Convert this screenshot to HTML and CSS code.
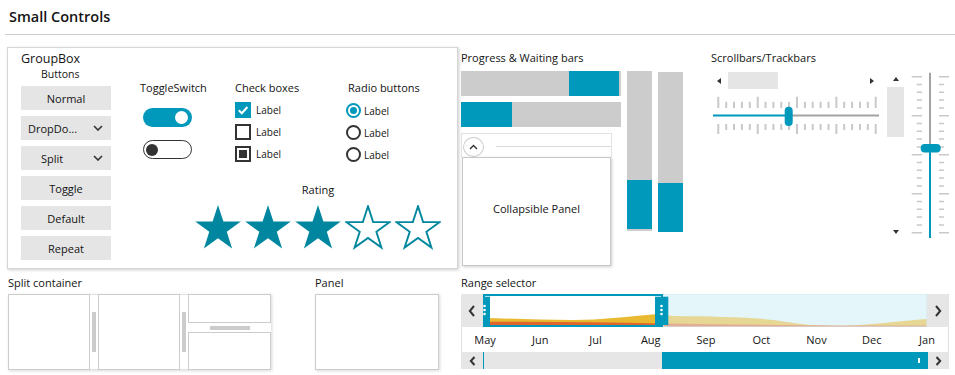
FILE: index.html
```html
<!DOCTYPE html>
<html lang="en">
<head>
    <meta charset="UTF-8">
    <title>Small Controls</title>
    <link rel="stylesheet" href="styles.css">
</head>
<body>
<div class="page">
    <h1 class="page-title">Small Controls</h1>

    <div class="row-top">
        <!-- GROUPBOX -->
        <div class="groupbox">
            <div class="groupbox-title">GroupBox</div>
            <div class="groupbox-body">
                <div class="buttons-col">
                    <div class="col-title">Buttons</div>
                    <button class="btn">Normal</button>
                    <button class="btn btn-drop">
                        <span class="btn-text">DropDo...</span>
                        <svg class="chev" width="10" height="6" viewBox="0 0 10 6"><path d="M1 1L5 5L9 1" /></svg>
                    </button>
                    <button class="btn btn-split">
                        <span>Split</span>
                        <svg class="chev" width="10" height="6" viewBox="0 0 10 6"><path d="M1 1L5 5L9 1" /></svg>
                    </button>
                    <button class="btn">Toggle</button>
                    <button class="btn">Default</button>
                    <button class="btn">Repeat</button>
                </div>

                <div class="controls">
                    <div class="controls-row">
                        <div class="toggles">
                            <div class="ctl-title">ToggleSwitch</div>
                            <div class="toggle toggle-on"><span class="knob"></span></div>
                            <div class="toggle toggle-off"><span class="knob"></span></div>
                        </div>
                        <div class="checks">
                            <div class="ctl-title">Check boxes</div>
                            <div class="check-list">
                                <div class="check">
                                    <span class="box box-checked">
                                        <svg width="12" height="12" viewBox="0 0 12 12"><path d="M1.8 6.3L4.8 9.2L10.4 3" /></svg>
                                    </span>Label
                                </div>
                                <div class="check"><span class="box"></span>Label</div>
                                <div class="check"><span class="box box-mixed"><span class="box-fill"></span></span>Label</div>
                            </div>
                        </div>
                        <div class="radios">
                            <div class="ctl-title">Radio buttons</div>
                            <div class="radio-list">
                                <div class="radio"><span class="dot dot-on"><span class="dot-fill"></span></span>Label</div>
                                <div class="radio"><span class="dot"></span>Label</div>
                                <div class="radio"><span class="dot"></span>Label</div>
                            </div>
                        </div>
                    </div>

                    <div class="rating">
                        <div class="rating-title">Rating</div>
                        <div class="stars">
                            <svg class="star star-full" width="46" height="45" viewBox="0 0 46 45"><polygon points="23,0 28.4,16.6 45.8,16.6 31.8,26.8 37.1,43.4 23,33.2 8.9,43.4 14.3,26.8 0.2,16.6 17.6,16.6" /></svg>
                            <svg class="star star-full" width="46" height="45" viewBox="0 0 46 45"><polygon points="23,0 28.4,16.6 45.8,16.6 31.8,26.8 37.1,43.4 23,33.2 8.9,43.4 14.3,26.8 0.2,16.6 17.6,16.6" /></svg>
                            <svg class="star star-full" width="46" height="45" viewBox="0 0 46 45"><polygon points="23,0 28.4,16.6 45.8,16.6 31.8,26.8 37.1,43.4 23,33.2 8.9,43.4 14.3,26.8 0.2,16.6 17.6,16.6" /></svg>
                            <svg class="star star-empty" width="46" height="45" viewBox="-1.2 -1.2 48.4 47"><polygon points="23,0 28.4,16.6 45.8,16.6 31.8,26.8 37.1,43.4 23,33.2 8.9,43.4 14.3,26.8 0.2,16.6 17.6,16.6" /></svg>
                            <svg class="star star-empty" width="46" height="45" viewBox="-1.2 -1.2 48.4 47"><polygon points="23,0 28.4,16.6 45.8,16.6 31.8,26.8 37.1,43.4 23,33.2 8.9,43.4 14.3,26.8 0.2,16.6 17.6,16.6" /></svg>
                        </div>
                    </div>
                </div>
            </div>
        </div>

        <!-- PROGRESS -->
        <div class="progress-section">
            <div class="section-title">Progress &amp; Waiting bars</div>
            <div class="progress-grid">
                <div class="hbar hbar-1"><div class="bar-fill" style="margin-left: 108px; width: 50px;"></div></div>
                <div class="hbar hbar-2"><div class="bar-fill" style="width: 51px;"></div></div>
                <div class="collapsible">
                    <div class="collapse-head">
                        <span class="collapse-btn">
                            <svg width="9" height="6" viewBox="0 0 9 6"><path d="M1 5L4.5 1.5L8 5" /></svg>
                        </span>
                        <span class="collapse-line"></span>
                    </div>
                    <div class="collapse-body">Collapsible Panel</div>
                </div>
                <div class="vbar vbar-1"><div class="bar-fill" style="height: 49px;"></div></div>
                <div class="vbar vbar-2"><div class="bar-fill" style="height: 49px;"></div></div>
            </div>
        </div>

        <!-- SCROLLBARS -->
        <div class="scroll-section">
            <div class="section-title">Scrollbars/Trackbars</div>
            <div class="scroll-body">
                <div class="scroll-left">
                    <div class="hscroll">
                        <span class="tri tri-left"></span>
                        <span class="hscroll-thumb"></span>
                        <span class="tri tri-right"></span>
                    </div>
                    <svg class="htrack" width="167" height="40" viewBox="0 0 167 40">
                        <path class="tick" d="M5.3 0.7V12M44.7 0.7V12M84 0.7V12M123.4 0.7V12M162.7 0.7V12M5.3 28V38M44.7 28V38M84 28V38M123.4 28V38M162.7 28V38" />
                        <path class="tick" d="M13.2 5.7V12M21 5.7V12M28.9 5.7V12M36.8 5.7V12M52.5 5.7V12M60.4 5.7V12M68.3 5.7V12M76.1 5.7V12M91.9 5.7V12M99.7 5.7V12M107.6 5.7V12M115.5 5.7V12M131.2 5.7V12M139.1 5.7V12M147 5.7V12M154.8 5.7V12" />
                        <path class="tick" d="M13.2 28V34M21 28V34M28.9 28V34M36.8 28V34M52.5 28V34M60.4 28V34M68.3 28V34M76.1 28V34M91.9 28V34M99.7 28V34M107.6 28V34M115.5 28V34M131.2 28V34M139.1 28V34M147 28V34M154.8 28V34" />
                        <path class="track-off" d="M76 19.5H166" />
                        <path class="track-on" d="M0 19.5H76" />
                        <rect class="thumb" x="71.7" y="10.7" width="8" height="19.3" rx="4" />
                    </svg>
                </div>
                <div class="vscroll">
                    <span class="tri tri-up"></span>
                    <span class="vscroll-thumb"></span>
                    <span class="tri tri-down"></span>
                </div>
                <svg class="vtrack" width="41" height="168" viewBox="0 0 41 168">
                    <path class="tick tick-thin" d="M1.7 4.7H12M1.7 43.7H12M1.7 82.7H12M1.7 121.7H12M1.7 160.7H12M29 4.7H39M29 43.7H39M29 82.7H39M29 121.7H39M29 160.7H39" />
                    <path class="tick tick-thin" d="M6.7 12.5H12M6.7 20.3H12M6.7 28.1H12M6.7 35.9H12M6.7 51.5H12M6.7 59.3H12M6.7 67.1H12M6.7 74.9H12M6.7 90.5H12M6.7 98.3H12M6.7 106.1H12M6.7 113.9H12M6.7 129.5H12M6.7 137.3H12M6.7 145.1H12M6.7 152.9H12" />
                    <path class="tick tick-thin" d="M29 12.5H34M29 20.3H34M29 28.1H34M29 35.9H34M29 51.5H34M29 59.3H34M29 67.1H34M29 74.9H34M29 90.5H34M29 98.3H34M29 106.1H34M29 113.9H34M29 129.5H34M29 137.3H34M29 145.1H34M29 152.9H34" />
                    <path class="track-off" d="M20 0.7V76" />
                    <path class="track-on" d="M20 76V166" />
                    <rect class="thumb" x="10.7" y="72" width="20" height="8.4" rx="4" />
                </svg>
            </div>
        </div>
    </div>

    <div class="row-bottom">
        <!-- SPLIT CONTAINER -->
        <div class="split-section">
            <div class="bottom-title">Split container</div>
            <div class="split-box">
                <div class="pane pane-side"></div>
                <div class="vsplit"><span class="grip-v"></span></div>
                <div class="pane pane-side"></div>
                <div class="vsplit"><span class="grip-v"></span></div>
                <div class="split-right">
                    <div class="pane pane-top"></div>
                    <div class="hsplit"><span class="grip-h"></span></div>
                    <div class="pane pane-bottom"></div>
                </div>
            </div>
        </div>

        <!-- PANEL -->
        <div class="panel-section">
            <div class="bottom-title">Panel</div>
            <div class="panel-box"></div>
        </div>

        <!-- RANGE SELECTOR -->
        <div class="range-section">
            <div class="bottom-title">Range selector</div>
            <div class="range">
                <div class="range-chart-row">
                    <div class="range-arrow">
                        <svg class="rchev" width="8" height="12" viewBox="0 0 8 12"><path d="M6 1L1.8 6L6 11" /></svg>
                    </div>
                    <div class="range-chart">
                        <svg width="444" height="33" viewBox="0 0 444 33">
                            <rect x="0" y="0" width="180" height="33" fill="#ffffff" />
                            <path fill="#e8b931" d="M0 24C30 24.5 60 26 90 26C120 26 140 23 172 20.3C178 20 183 21 190 22C230 22.5 265 23 290 26C305 28 320 31 345 32C370 33 400 28.5 444 25L444 33L0 33Z" />
                            <path fill="#e0652b" d="M0 28C60 27.5 120 28.5 180 29.5C260 30.5 340 32 444 31.5L444 33L0 33Z" />
                            <rect x="180" y="0" width="264" height="33" fill="#e4f6fa" fill-opacity="0.5" stroke="#cfe9f0" />
                            <rect x="1" y="1" width="178" height="31" fill="none" stroke="#0098bb" stroke-width="2" />
                            <rect x="-6" y="2.7" width="13" height="28.3" fill="#0098bb" />
                            <rect x="172" y="2.7" width="13.3" height="28.3" fill="#0098bb" />
                            <g fill="#ffffff">
                                <circle cx="1.5" cy="12" r="1.3" />
                                <circle cx="1.5" cy="16" r="1.3" />
                                <circle cx="1.5" cy="20" r="1.3" />
                                <circle cx="178.5" cy="12" r="1.3" />
                                <circle cx="178.5" cy="16" r="1.3" />
                                <circle cx="178.5" cy="20" r="1.3" />
                            </g>
                        </svg>
                    </div>
                    <div class="range-arrow">
                        <svg class="rchev" width="8" height="12" viewBox="0 0 8 12"><path d="M2 1L6.2 6L2 11" /></svg>
                    </div>
                </div>
                <div class="range-months">
                    <span>May</span><span>Jun</span><span>Jul</span><span>Aug</span><span>Sep</span>
                    <span>Oct</span><span>Nov</span><span>Dec</span><span>Jan</span>
                </div>
                <div class="range-scroll">
                    <div class="range-arrow">
                        <svg class="rchev" width="7" height="10" viewBox="0 0 7 10"><path d="M5.5 1L1.8 5L5.5 9" /></svg>
                    </div>
                    <div class="range-track">
                        <div class="range-thumb" style="margin-left: 178px; width: 266px;"><span class="thumb-mark"></span></div>
                    </div>
                    <div class="range-arrow range-arrow-end">
                        <svg class="rchev" width="7" height="10" viewBox="0 0 7 10"><path d="M1.5 1L5.2 5L1.5 9" /></svg>
                    </div>
                </div>
            </div>
        </div>
    </div>
</div>
</body>
</html>
```

FILE: styles.css
```css
* {
    box-sizing: border-box;
}

body {
    margin: 0;
    font-family: "Open Sans", "Noto Sans", sans-serif;
    font-size: 11px;
    color: #141414;
    background: #fff;
}

.page {
    width: 955px;
    height: 375px;
    overflow: hidden;
}

.page-title {
    margin: 0 0 0 5px;
    padding: 7px 0 7px 4px;
    font-size: 14.5px;
    font-weight: 600;
    line-height: 20px;
    border-bottom: 1px solid #cfcfcf;
}

/* top row */
.row-top {
    display: flex;
    align-items: flex-start;
    margin-top: 12px;
    height: 222px;
}

.groupbox {
    margin-left: 7px;
    width: 451px;
    height: 222px;
    border: 1px solid #d6d6d6;
    box-shadow: 1px 1px 3px rgba(0,0,0,0.2);
}

.groupbox-title {
    padding: 3px 0 0 13px;
    height: 19px;
    font-size: 12.5px;
    line-height: 16px;
}

.groupbox-body {
    display: flex;
    padding-left: 13px;
}

.buttons-col {
    width: 90px;
    display: flex;
    flex-direction: column;
}

.col-title {
    font-size: 10.5px;
    line-height: 14px;
    padding-left: 20px;
    margin-bottom: 5px;
}

.btn {
    height: 24px;
    margin-bottom: 6px;
    padding: 0;
    border: none;
    background: #e5e5e5;
    font: inherit;
    color: inherit;
    display: flex;
    align-items: center;
    justify-content: center;
}

.btn-drop {
    justify-content: space-between;
    padding: 0 8px 0 7px;
}

.btn-text {
    white-space: nowrap;
}

.btn-split {
    justify-content: space-between;
    padding: 0 8px 0 20px;
}

.chev path {
    fill: none;
    stroke: #333;
    stroke-width: 1.6;
}

.controls {
    padding: 13px 0 0 29px;
}

.controls-row {
    display: grid;
    grid-template-columns: 95px 111px auto;
}

.ctl-title {
    line-height: 15px;
}

.toggle {
    width: 49px;
    height: 19px;
    border-radius: 10px;
    margin: 13px 0 0 3px;
    display: flex;
    align-items: center;
}

.toggle-on {
    background: #0098bb;
    justify-content: flex-end;
    padding-right: 4px;
}

.toggle-on .knob {
    width: 13px;
    height: 13px;
    border-radius: 50%;
    background: #fff;
}

.toggle-off {
    border: 1.5px solid #333;
    padding-left: 2px;
}

.toggle-off .knob {
    width: 12px;
    height: 12px;
    border-radius: 50%;
    background: #333;
}

.check-list {
    margin-top: 7px;
}

.check {
    display: flex;
    align-items: center;
    height: 16px;
    margin-bottom: 6px;
    font-size: 10px;
}

.check:last-child,
.radio:last-child {
    margin-bottom: 0;
}

.box {
    width: 16px;
    height: 16px;
    border: 2px solid #333;
    margin-right: 5px;
}

.box-checked {
    background: #0098bb;
    border-color: #0098bb;
}

.box-checked svg {
    display: block;
}

.box-checked path {
    fill: none;
    stroke: #fff;
    stroke-width: 2;
}

.box-mixed {
    padding: 2px;
}

.box-fill {
    display: block;
    width: 100%;
    height: 100%;
    background: #333;
}

.radios .ctl-title {
    padding-left: 2px;
}

.radio-list {
    margin-top: 8px;
}

.radio {
    display: flex;
    align-items: center;
    height: 15px;
    margin-bottom: 7px;
    font-size: 10px;
}

.dot {
    width: 15px;
    height: 15px;
    border-radius: 50%;
    border: 2px solid #333;
    margin-right: 3px;
    padding: 2px;
}

.dot-on {
    border-color: #0098bb;
}

.dot-fill {
    display: block;
    width: 100%;
    height: 100%;
    border-radius: 50%;
    background: #0098bb;
}

.rating {
    margin: 20px 0 0 55px;
    width: 246px;
}

.rating-title {
    text-align: center;
    line-height: 15px;
}

.stars {
    display: flex;
    gap: 4px;
    margin-top: 8px;
}

.star-full polygon {
    fill: #00879f;
}

.star-empty polygon {
    fill: #fff;
    stroke: #00879f;
    stroke-width: 2;
}

/* progress */
.progress-section {
    margin-left: 3px;
    width: 222px;
}

.section-title {
    margin: 3px 0 6px;
    line-height: 15px;
}

.progress-grid {
    display: grid;
    grid-template-columns: 160px 25px 25px;
    grid-template-rows: 25px 25px auto;
    gap: 6px;
    align-items: start;
}

.hbar {
    grid-column: 1;
    height: 25px;
    display: flex;
    background: #cccccc;
}

.hbar-1 {
    grid-row: 1;
}

.hbar-2 {
    grid-row: 2;
}

.bar-fill {
    background: #0098bb;
}

.vbar {
    grid-row: 1 / 4;
    height: 160px;
    background: #cccccc;
    display: flex;
    flex-direction: column;
    justify-content: flex-end;
}

.vbar-1 {
    grid-column: 2;
}

.vbar-1 .bar-fill {
    margin-bottom: 2px;
}

.vbar-2 {
    grid-column: 3;
    margin-top: 1px;
}

.collapsible {
    grid-column: 1;
    grid-row: 3;
    width: 151px;
    display: flex;
    flex-direction: column;
}

.collapse-head {
    height: 24px;
    border: 1px solid #e2e2e2;
    border-bottom: none;
    display: flex;
    align-items: flex-end;
    padding-left: 1px;
}

.collapse-btn {
    width: 21px;
    height: 20px;
    border: 1px solid #cdcdcd;
    border-radius: 50%;
    display: flex;
    align-items: center;
    justify-content: center;
}

.collapse-btn path {
    fill: none;
    stroke: #333;
    stroke-width: 1.4;
}

.collapse-line {
    flex: 1;
    height: 1px;
    margin: 0 0 10px 12px;
    background: #dadada;
}

.collapse-body {
    height: 109px;
    margin: 0 1px;
    border: 1px solid #c8c8c8;
    box-shadow: 1px 1px 3px rgba(0,0,0,0.2);
    display: flex;
    align-items: center;
    justify-content: center;
    padding-bottom: 6px;
}

/* scrollbars */
.scroll-section {
    margin-left: 28px;
    width: 244px;
}

.scroll-body {
    display: flex;
    align-items: flex-start;
}

.scroll-left {
    width: 168px;
    padding: 1px 0 0 2px;
}

.hscroll {
    width: 164px;
    height: 17px;
    display: flex;
    align-items: center;
    padding: 0 3px 0 4px;
}

.hscroll-thumb {
    width: 50px;
    height: 17px;
    margin-left: 7px;
    background: #e5e5e5;
}

.tri {
    width: 0;
    height: 0;
    border-style: solid;
    border-color: transparent;
}

.tri-left {
    border-width: 3.5px 4px 3.5px 0;
    border-right-color: #333;
}

.tri-right {
    margin-left: auto;
    border-width: 3.5px 0 3.5px 4px;
    border-left-color: #333;
}

.tri-up {
    border-width: 0 3.5px 4px 3.5px;
    border-bottom-color: #333;
}

.tri-down {
    margin-top: auto;
    border-width: 4px 3.5px 0 3.5px;
    border-top-color: #333;
}

.htrack {
    display: block;
    margin-top: 7px;
}

.tick {
    fill: none;
    stroke: #c9c9c9;
    stroke-width: 2;
}

.tick-thin {
    stroke-width: 1.5;
}

.track-on {
    fill: none;
    stroke: #0098bb;
    stroke-width: 2;
}

.track-off {
    fill: none;
    stroke: #a3a3a3;
    stroke-width: 2;
}

.thumb {
    fill: #0098bb;
}

.vscroll {
    width: 17px;
    height: 167px;
    margin: 1px 0 0 8px;
    padding: 5px 0 5px;
    display: flex;
    flex-direction: column;
    align-items: center;
}

.vscroll-thumb {
    width: 17px;
    height: 50px;
    margin-top: 6px;
    background: #e5e5e5;
}

.vtrack {
    display: block;
    margin: 1px 0 0 6px;
}

/* bottom row */
.row-bottom {
    display: flex;
}

.bottom-title {
    margin: 6px 0 4px;
    line-height: 15px;
}

.split-section {
    margin-left: 8px;
}

.split-box {
    display: flex;
    width: 263px;
    height: 76px;
    box-shadow: 1px 1px 3px rgba(0,0,0,0.15);
}

.pane {
    border: 1px solid #cccccc;
}

.pane-side {
    width: 82px;
}

.vsplit {
    width: 8px;
    display: flex;
    align-items: center;
    justify-content: center;
    border-top: 1px solid #e2e2e2;
    border-bottom: 1px solid #e2e2e2;
}

.grip-v {
    width: 4px;
    height: 40px;
    background: #cccccc;
}

.split-right {
    width: 83px;
    display: flex;
    flex-direction: column;
}

.pane-top {
    height: 29px;
}

.hsplit {
    height: 9px;
    display: flex;
    align-items: center;
    justify-content: center;
}

.grip-h {
    width: 40px;
    height: 4px;
    background: #cccccc;
}

.pane-bottom {
    flex: 1;
}

.panel-section {
    margin-left: 44px;
}

.panel-box {
    width: 124px;
    height: 76px;
    border: 1px solid #cccccc;
    box-shadow: 1px 1px 3px rgba(0,0,0,0.15);
}

.range-section {
    margin-left: 22px;
}

.range {
    width: 488px;
}

.range-chart-row {
    display: flex;
    height: 33px;
}

.range-arrow {
    width: 22px;
    background: #e6e6e6;
    display: flex;
    align-items: center;
    justify-content: center;
}

.range-arrow-end {
    width: 21px;
}

.rchev path {
    fill: none;
    stroke: #333;
    stroke-width: 2;
}

.range-chart {
    width: 444px;
    background: #e4f6fa;
}

.range-chart svg {
    display: block;
}

.range-months {
    height: 25px;
    display: flex;
    justify-content: space-between;
    align-items: center;
    padding: 0 6px 0 8px;
    border-left: 1px solid #e0e0e0;
    border-right: 1px solid #e0e0e0;
}

.range-months span {
    width: 30px;
    text-align: center;
}

.range-scroll {
    display: flex;
    height: 17px;
    background: #e6e6e6;
}

.range-track {
    flex: 1;
    display: flex;
    border-left: 1px solid #0098bb;
}

.range-thumb {
    background: #0098bb;
    display: flex;
    align-items: center;
    justify-content: flex-end;
    padding-right: 8px;
}

.thumb-mark {
    width: 2px;
    height: 5px;
    background: #fff;
}
```
